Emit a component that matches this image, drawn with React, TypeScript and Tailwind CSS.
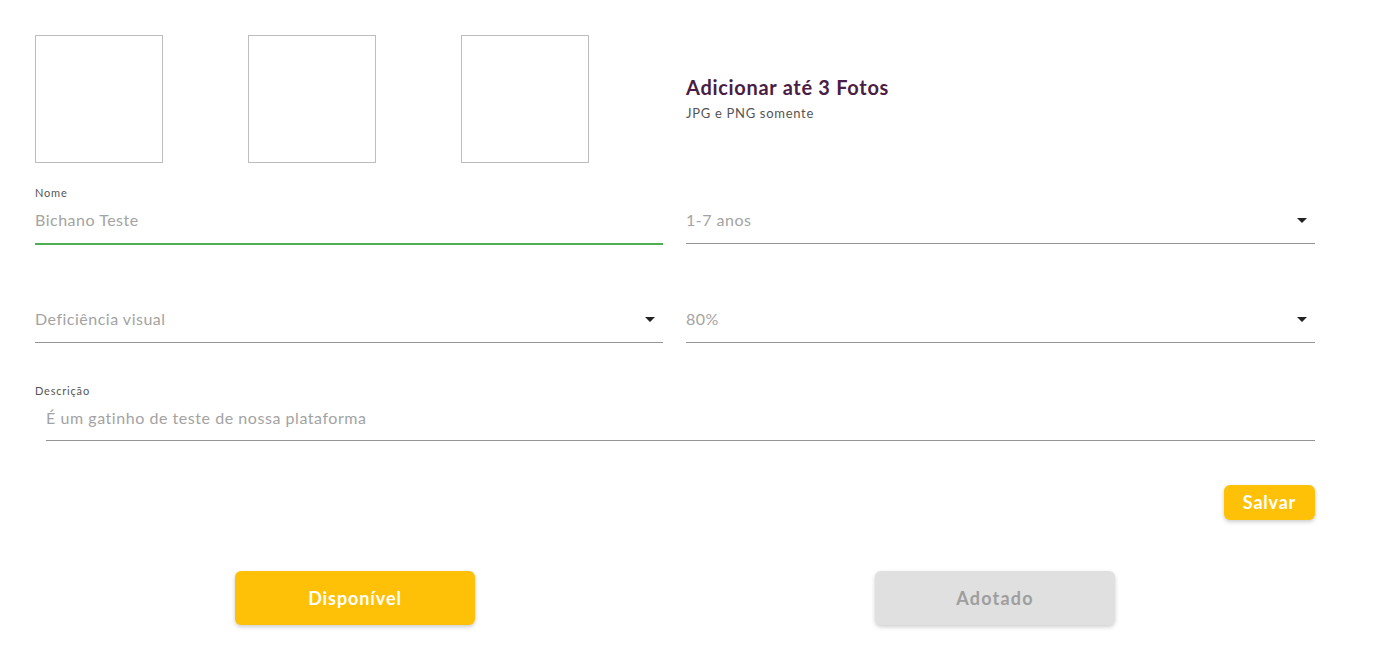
import React from "react";

function Arrow() {
  return (
    <svg width="10" height="5" viewBox="0 0 10 5" className="shrink-0">
      <path d="M0 0 L10 0 L5 5 Z" fill="#222" />
    </svg>
  );
}

function SelectField({ value }: { value: string }) {
  return (
    <div className="flex flex-col">
      <div className="h-[16px]" />
      <div className="h-[43px] flex items-center justify-between pb-[4px] pr-[8px] border-b border-[#949494]">
        <span className="text-[16px] tracking-[0.5px] text-[#a3a3a3]">{value}</span>
        <Arrow />
      </div>
    </div>
  );
}

export default function App() {
  return (
    <div
      className="w-[1397px] h-[671px] bg-white overflow-hidden"
      style={{ fontFamily: "Lato, 'Noto Sans', sans-serif" }}
    >
      <div className="ml-[35px] w-[1280px] pt-[35px]">
        {/* photos row */}
        <div className="grid grid-cols-[628px_629px] gap-[23px]">
          <div className="flex gap-[85px]">
            <div className="w-[128px] h-[128px] border border-[#bdbdbd]" />
            <div className="w-[128px] h-[128px] border border-[#bdbdbd]" />
            <div className="w-[128px] h-[128px] border border-[#bdbdbd]" />
          </div>
          <div className="flex flex-col justify-center pb-[3px]">
            <div className="text-[20px] font-bold tracking-[0.7px] text-[#4a1d44] leading-[26px]">
              Adicionar até 3 Fotos
            </div>
            <div className="text-[13px] tracking-[0.7px] text-[#555] leading-[18px] mt-[4px]">
              JPG e PNG somente
            </div>
          </div>
        </div>

        {/* row 1 */}
        <div className="grid grid-cols-[628px_629px] gap-[23px] mt-[22px] items-start">
          <div className="flex flex-col">
            <div className="h-[16px] text-[11px] tracking-[0.8px] leading-[16px] text-[#555]">Nome</div>
            <div className="h-[44px] flex items-center pb-[4px] border-b-2 border-[#4caf50]">
              <span className="text-[16px] tracking-[0.5px] text-[#a3a3a3]">Bichano Teste</span>
            </div>
          </div>
          <SelectField value="1-7 anos" />
        </div>

        {/* row 2 */}
        <div className="grid grid-cols-[628px_629px] gap-[23px] mt-[39px] items-start">
          <SelectField value="Deficiência visual" />
          <SelectField value="80%" />
        </div>

        {/* row 3 */}
        <div className="flex flex-col mt-[40px]">
          <div className="h-[16px] text-[11px] tracking-[0.8px] leading-[16px] text-[#555]">Descrição</div>
          <div className="ml-[11px] h-[42px] flex items-center pb-[3px] border-b border-[#949494]">
            <span className="text-[16px] tracking-[0.55px] text-[#a3a3a3]">É um gatinho de teste de nossa plataforma</span>
          </div>
        </div>

        <div className="flex justify-end mt-[44px]">
          <button className="w-[91px] h-[35px] rounded-[6px] bg-[#ffc107] text-white font-bold text-[18px] tracking-[0.8px] shadow-[0_2px_4px_rgba(0,0,0,0.2)]">
            Salvar
          </button>
        </div>

        <div className="grid grid-cols-2 mt-[51px]">
          <div className="flex justify-center">
            <button className="w-[240px] h-[54px] rounded-[6px] bg-[#ffc107] text-white font-bold text-[18px] tracking-[0.9px] shadow-[0_2px_4px_rgba(0,0,0,0.2)]">
              Disponível
            </button>
          </div>
          <div className="flex justify-center">
            <button className="w-[240px] h-[54px] rounded-[6px] bg-[#e0e0e0] text-[#9e9e9e] font-bold text-[18px] tracking-[1.2px] shadow-[0_2px_4px_rgba(0,0,0,0.2)]">
              Adotado
            </button>
          </div>
        </div>
      </div>
    </div>
  );
}
